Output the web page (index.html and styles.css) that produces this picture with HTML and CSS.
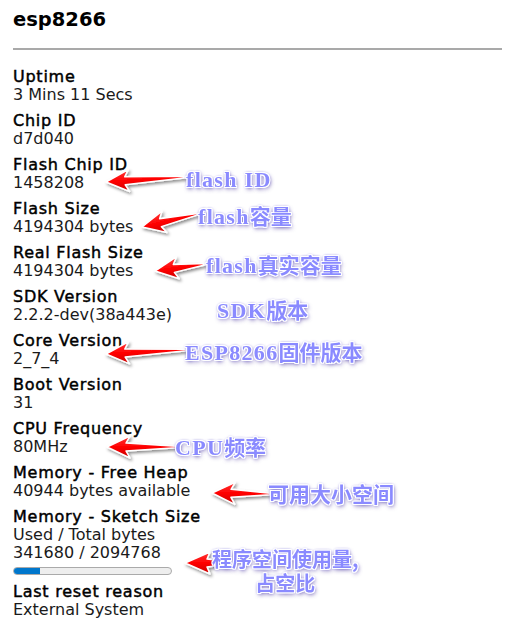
FILE: index.html
```html
<!DOCTYPE html>
<html lang="zh">
<head>
<meta charset="utf-8">
<title>esp8266</title>
<link rel="stylesheet" href="styles.css">
</head>
<body>
<div class="page">
  <h1 class="title">esp8266</h1>
  <hr class="rule">
  <dl class="info">
    <div class="item"><dt>Uptime</dt><dd>3 Mins 11 Secs</dd></div>
    <div class="item"><dt>Chip ID</dt><dd>d7d040</dd></div>
    <div class="item"><dt>Flash Chip ID</dt><dd>1458208</dd></div>
    <div class="item"><dt>Flash Size</dt><dd>4194304 bytes</dd></div>
    <div class="item"><dt>Real Flash Size</dt><dd>4194304 bytes</dd></div>
    <div class="item"><dt>SDK Version</dt><dd>2.2.2-dev(38a443e)</dd></div>
    <div class="item"><dt>Core Version</dt><dd>2_7_4</dd></div>
    <div class="item"><dt>Boot Version</dt><dd>31</dd></div>
    <div class="item"><dt>CPU Frequency</dt><dd>80MHz</dd></div>
    <div class="item"><dt>Memory - Free Heap</dt><dd>40944 bytes available</dd></div>
    <div class="item"><dt>Memory - Sketch Size</dt><dd>Used / Total bytes<br>341680 / 2094768<div class="bar"><div class="fill" style="width:16.3%"></div></div></dd></div>
    <div class="item"><dt>Last reset reason</dt><dd>External System</dd></div>
  </dl>

  <svg class="arrows" width="506" height="635" viewBox="0 0 506 635" aria-hidden="true">
    <defs>
      <linearGradient id="red" x1="0" y1="0" x2="0" y2="1">
        <stop offset="0" stop-color="#ff3b3b"/>
        <stop offset="0.5" stop-color="#ff0000"/>
        <stop offset="1" stop-color="#c80000"/>
      </linearGradient>
      <filter id="shadow" x="-20%" y="-60%" width="140%" height="220%">
        <feDropShadow dx="1.5" dy="2" stdDeviation="1.5" flood-color="#000" flood-opacity="0.45"/>
      </filter>
    </defs>
    <g fill="url(#red)" stroke="#fff" stroke-width="1.5" stroke-linejoin="round" filter="url(#shadow)">
      <path transform="translate(106 182) rotate(-3.6)" d="M0 0 L23 -11 L19 -4 L80 -0.7 L80 0.7 L19 4 L23 11 Z"/>
      <path transform="translate(142 227) rotate(-13)" d="M0 0 L23 -11 L19 -4 L57 -0.7 L57 0.7 L19 4 L23 11 Z"/>
      <path transform="translate(155 271) rotate(-7.8)" d="M0 0 L23 -11 L19 -4 L51 -0.7 L51 0.7 L19 4 L23 11 Z"/>
      <path transform="translate(106 354) rotate(-2.9)" d="M0 0 L23 -11 L19 -4 L80 -0.7 L80 0.7 L19 4 L23 11 Z"/>
      <path transform="translate(107 447)" d="M0 0 L23 -11 L19 -4 L69 -0.7 L69 0.7 L19 4 L23 11 Z"/>
      <path transform="translate(212 493) rotate(1)" d="M0 0 L23 -11 L19 -4 L58 -0.7 L58 0.7 L19 4 L23 11 Z"/>
      <path transform="translate(185 563)" d="M0 0 L25 -11 L22 -4 L30 -3 L30 3 L22 4 L25 11 Z"/>
    </g>
  </svg>

  <div class="note n1"><span class="lat">flash ID</span></div>
  <div class="note n2"><span class="lat">flash</span>容量</div>
  <div class="note n3"><span class="lat">flash</span>真实容量</div>
  <div class="note n4"><span class="lat">SDK</span>版本</div>
  <div class="note n5"><span class="lat">ESP8266</span>固件版本</div>
  <div class="note n6"><span class="lat">CPU</span>频率</div>
  <div class="note n7">可用大小空间</div>
  <div class="note n8"><div>程序空间使用量,</div><div>占空比</div></div>
</div>
</body>
</html>
```

FILE: styles.css
```css
html, body {
  margin: 0;
  padding: 0;
  background: #fff;
}

.page {
  position: relative;
  width: 506px;
  height: 635px;
  box-sizing: border-box;
  padding: 0 4px 0 13px;
  overflow: hidden;
  font-family: "DejaVu Sans", Verdana, sans-serif;
  color: #111;
}

.title {
  margin: 8px 0 0;
  font-size: 19.5px;
  line-height: 24px;
  font-weight: bold;
  color: #000;
}

.rule {
  margin: 16px 0 0;
  border: 0;
  height: 2px;
  background: #a9a9a9;
}

.info {
  margin: 18px 0 0;
  padding: 0;
}

.item {
  margin: 0 0 8px;
}

.item dt {
  font-size: 16px;
  line-height: 18px;
  font-weight: normal;
  letter-spacing: 0.75px;
  color: #000;
  -webkit-text-stroke: 0.45px #000;
}

.item dd {
  margin: 0;
  font-size: 16px;
  line-height: 18px;
  color: #1a1a1a;
}

.bar {
  margin: 5px 0 5px;
  width: 159px;
  height: 8px;
  box-sizing: border-box;
  border: 1px solid #aaa;
  border-radius: 4px;
  background: #eee;
  overflow: hidden;
}

.fill {
  height: 100%;
  background: #0077cc;
}

.arrows {
  position: absolute;
  left: 0;
  top: 0;
  pointer-events: none;
  overflow: visible;
}

.note {
  position: absolute;
  font-family: "Noto Sans CJK SC", sans-serif;
  font-weight: bold;
  font-size: 21px;
  line-height: 24px;
  white-space: nowrap;
  color: #8a8aff;
  text-shadow:
    -1px -1px 0 #fff, 1px -1px 0 #fff, -1px 1px 0 #fff, 1px 1px 0 #fff,
    0 -1px 0 #fff, 0 1px 0 #fff, -1px 0 0 #fff, 1px 0 0 #fff,
    0 0 3px #5a4fd6, 1px 2px 4px rgba(70, 50, 150, 0.8);
}

.lat {
  font-family: "Liberation Serif", serif;
  font-size: 22px;
  letter-spacing: 1.3px;
}

.n1 { left: 186px; top: 166px; }
.n2 { left: 198px; top: 203px; }
.n3 { left: 206px; top: 252px; }
.n4 { left: 217px; top: 297px; }
.n5 { left: 185px; top: 339px; }
.n6 { left: 175px; top: 434px; }
.n7 { left: 268px; top: 481px; }
.n8 {
  left: 212px;
  top: 547px;
  font-size: 20px;
  line-height: 24px;
  text-align: center;
}
```
